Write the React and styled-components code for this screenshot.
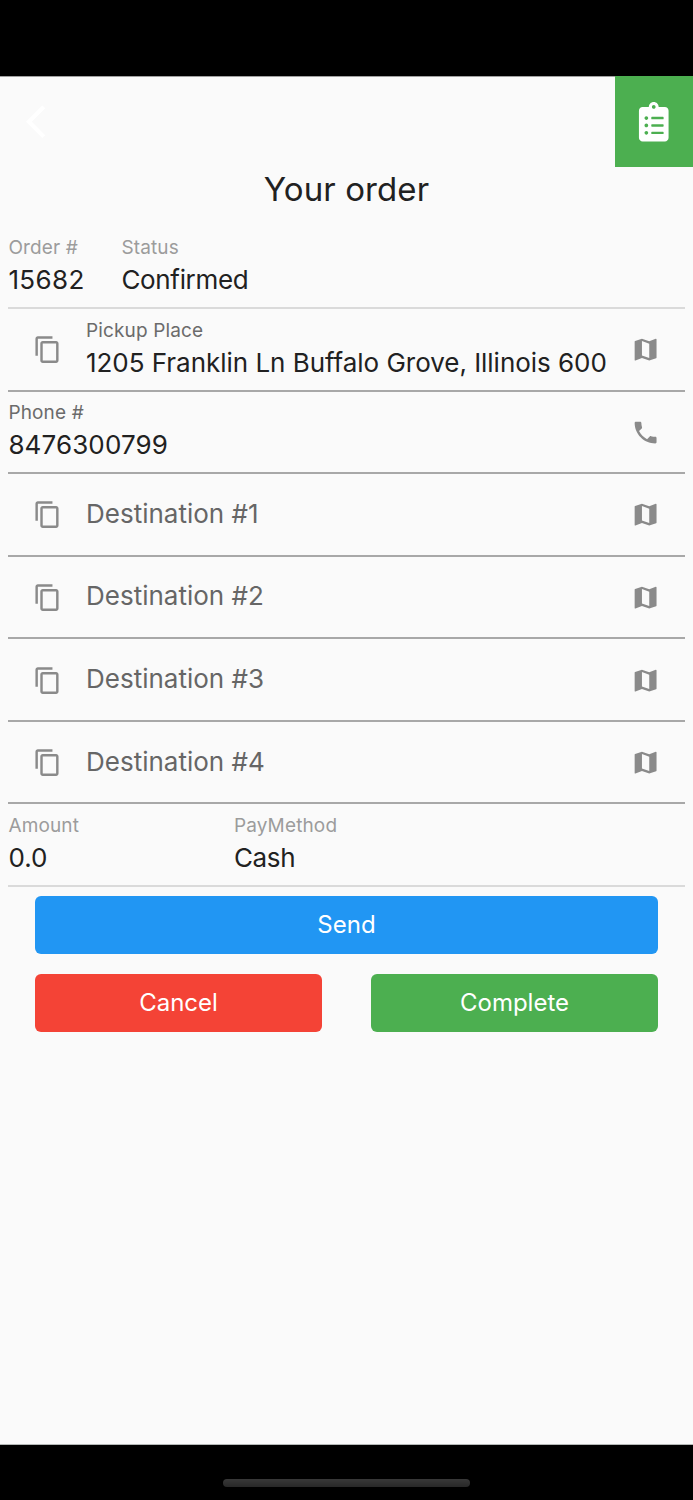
import React from "react";
import styled, { createGlobalStyle } from "styled-components";
import { MdArrowBackIos, MdContentCopy, MdMap, MdPhone } from "react-icons/md";
import { FaClipboardList } from "react-icons/fa";

const GlobalStyle = createGlobalStyle`
  * { box-sizing: border-box; }
  body { margin: 0; background: #000; font-family: Inter, "Liberation Sans", sans-serif; }
`;

const Phone = styled.div`
  width: 693px;
  height: 1500px;
  display: flex;
  flex-direction: column;
  background: #000;
  color: #212121;
  overflow: hidden;
`;

const StatusBar = styled.div`
  flex: none;
  height: 76px;
`;

const Screen = styled.main`
  flex: none;
  height: 1369px;
  background: #fafafa;
  border-top: 1px solid #a0a0a0;
  border-bottom: 1px solid #b4b8b6;
`;

const AppBar = styled.header`
  display: flex;
  justify-content: space-between;
  height: 90px;
`;

const BackButton = styled.button`
  display: flex;
  align-items: center;
  width: 90px;
  padding: 0 0 1px 26px;
  border: 0;
  background: none;
  color: #fff;
  font-size: 39.5px;
`;

const OrdersButton = styled.button`
  display: flex;
  align-items: center;
  justify-content: center;
  width: 78px;
  margin-top: -1px;
  padding: 1px 0 0;
  border: 0;
  background: #4caf50;
  color: #fff;
  font-size: 39.5px;
`;

const Title = styled.h1`
  margin: 0;
  height: 59.4px;
  line-height: 44px;
  text-align: center;
  font-size: 33px;
  font-weight: 400;
  letter-spacing: 0.1px;
`;

const Form = styled.div`
  padding: 0 8.4px;
`;

const Row = styled.div`
  display: flex;
  align-items: center;
  height: 82.57px;
  border-bottom: 2px solid ${(p) => (p.$disabled ? "#dadada" : "#a8a8a8")};
`;

const Field = styled.div`
  display: flex;
  flex-direction: column;
  flex: ${(p) => (p.$width ? `0 0 ${p.$width}px` : "1 1 0")};
  min-width: 0;
  white-space: nowrap;
`;

const Label = styled.span`
  height: 30px;
  line-height: 28px;
  font-size: 19px;
  letter-spacing: 0.14px;
  color: ${(p) => (p.$disabled ? "#9c9c9c" : "#6b6b6b")};
`;

const Value = styled.span`
  height: 35px;
  line-height: 31px;
  font-size: 26px;
  letter-spacing: ${(p) => p.$spacing ?? 0}px;
`;

const Placeholder = styled(Value)`
  line-height: 34px;
  color: #666;
`;

const IconSlot = styled.span`
  display: flex;
  align-items: center;
  justify-content: center;
  flex: none;
  width: 77.6px;
  padding-top: 1.4px;
  color: #8a8a8a;
  font-size: 29.2px;
`;

const Actions = styled.div`
  display: grid;
  grid-template-columns: 1fr 1fr;
  gap: 20px 49px;
  padding: 9px 26.6px 0;
`;

const Button = styled.button`
  grid-column: ${(p) => (p.$wide ? "1 / -1" : "auto")};
  height: 58px;
  padding: 0;
  border: 0;
  border-radius: 6px;
  background: ${(p) => p.$color};
  color: #fff;
  font: 400 24px Inter, sans-serif;
`;

const HomeArea = styled.div`
  flex: 1;
  display: flex;
  justify-content: center;
  padding-top: 34px;
`;

const HomeIndicator = styled.div`
  width: 247px;
  height: 8px;
  border-radius: 4px;
  background: linear-gradient(#383838, #282828);
`;

const destinations = [1, 2, 3, 4];

export default function App() {
  return (
    <Phone>
      <GlobalStyle />
      <StatusBar />
      <Screen>
        <AppBar>
          <BackButton aria-label="Back"><MdArrowBackIos /></BackButton>
          <OrdersButton aria-label="Orders"><FaClipboardList /></OrdersButton>
        </AppBar>
        <Title>Your order</Title>
        <Form>
          <Row $disabled>
            <Field $width={113}>
              <Label $disabled>Order #</Label>
              <Value $spacing={0.4}>15682</Value>
            </Field>
            <Field>
              <Label $disabled>Status</Label>
              <Value $spacing={-0.33}>Confirmed</Value>
            </Field>
          </Row>
          <Row>
            <IconSlot><MdContentCopy /></IconSlot>
            <Field>
              <Label>Pickup Place</Label>
              <Value $spacing={-0.03}>1205 Franklin Ln Buffalo Grove, Illinois 600</Value>
            </Field>
            <IconSlot><MdMap /></IconSlot>
          </Row>
          <Row>
            <Field>
              <Label>Phone #</Label>
              <Value $spacing={0.12}>8476300799</Value>
            </Field>
            <IconSlot><MdPhone /></IconSlot>
          </Row>
          {destinations.map((n) => (
            <Row key={n}>
              <IconSlot><MdContentCopy /></IconSlot>
              <Field><Placeholder>Destination #{n}</Placeholder></Field>
              <IconSlot><MdMap /></IconSlot>
            </Row>
          ))}
          <Row $disabled>
            <Field $width={225.5}>
              <Label $disabled>Amount</Label>
              <Value>0.0</Value>
            </Field>
            <Field>
              <Label $disabled>PayMethod</Label>
              <Value $spacing={-0.35}>Cash</Value>
            </Field>
          </Row>
          <Actions>
            <Button $wide $color="#2196f3">Send</Button>
            <Button $color="#f44336">Cancel</Button>
            <Button $color="#4caf50">Complete</Button>
          </Actions>
        </Form>
      </Screen>
      <HomeArea><HomeIndicator /></HomeArea>
    </Phone>
  );
}
